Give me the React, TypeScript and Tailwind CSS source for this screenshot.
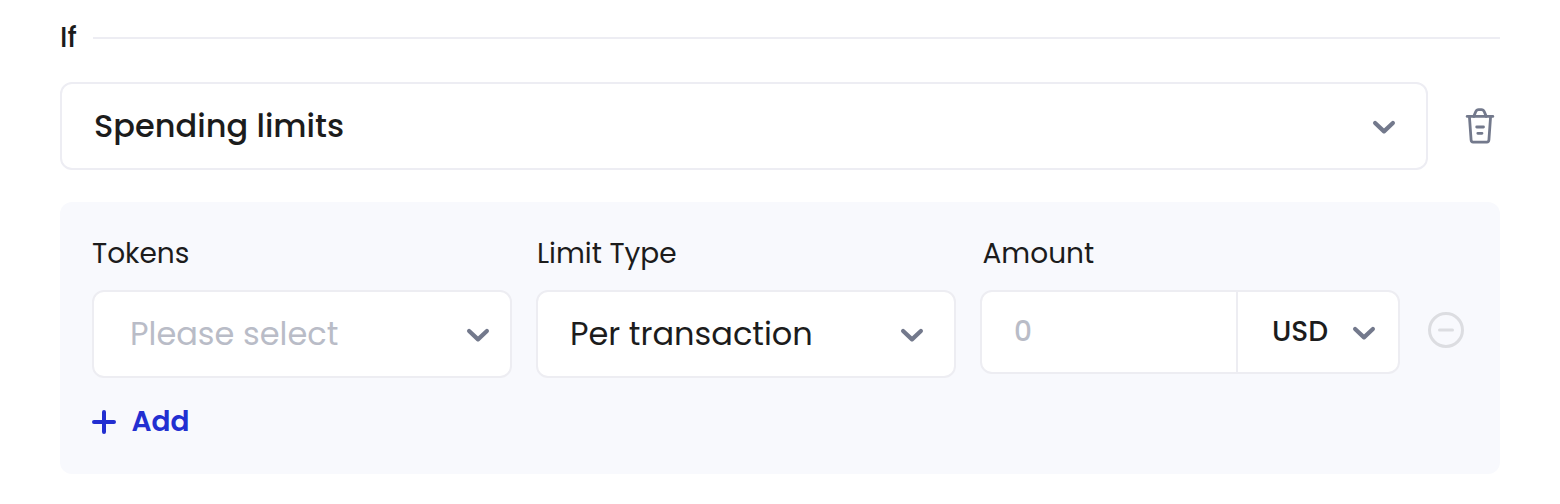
import type { ReactNode } from "react";

function Chevron() {
  return (
    <svg className="shrink-0" width="24" height="24" viewBox="0 0 24 24" fill="none" stroke="#73798c" strokeWidth="4.2" strokeLinecap="round" strokeLinejoin="round">
      <path d="M3.1 9 12 17.4l8.9-8.4" />
    </svg>
  );
}

function TrashIcon() {
  return (
    <svg className="shrink-0" width="40" height="40" viewBox="0 0 40 40" fill="none" stroke="#73798c" strokeWidth="2.8" strokeLinecap="round" strokeLinejoin="round">
      <path d="M7.2 10.4h25.6" />
      <path d="M13.8 10.4l1.9-4.6c.6-1.5 1.4-2.2 2.9-2.2h2.8c1.5 0 2.3.7 2.9 2.2l1.9 4.6" />
      <path d="M9.4 10.4l1.7 23.6c.1 1.4.7 2.1 2 2.1h13.8c1.3 0 1.9-.7 2-2.1l1.7-23.6" />
      <path d="M16.7 21h6.8M17.8 27.3h4.2" />
    </svg>
  );
}

function Field({ label, children }: { label: ReactNode; children: ReactNode }) {
  return (
    <div className="w-[420px]">
      <div className="h-9 text-[28px] leading-9 whitespace-nowrap">{label}</div>
      <div className="mt-[18px]">{children}</div>
    </div>
  );
}

export default function App() {
  return (
    <main className="h-[504px] w-[1560px] bg-white px-[60px] pt-[18px] font-['Poppins','Inter',sans-serif] text-[#1c1c1c]">
      <div className="flex h-10 items-center">
        <h2 className="w-[33px] text-[28px] leading-10 font-medium">If</h2>
        <div className="h-0.5 flex-1 bg-[#ededf3]" />
      </div>

      <div className="mt-6 flex items-center">
        <button className="flex h-[88px] w-[1368px] items-center justify-between rounded-xl border-2 border-[#ededf3] pr-[30px] pl-8 text-[32px] font-medium">
          <span>Spending limits</span>
          <Chevron />
        </button>
        <button className="ml-8" aria-label="Delete">
          <TrashIcon />
        </button>
      </div>

      <section className="mt-8 h-[272px] rounded-xl bg-[#f8f9fd] px-8 pt-[34px]">
        <div className="flex gap-6">
          <Field label={<span>Tokens</span>}>
            <button className="flex h-[88px] w-full items-center justify-between rounded-xl border-2 border-[#ededf2] bg-white pr-5 pl-9 text-[32px] text-[#b9bcc7]">
              <span>Please select</span>
              <Chevron />
            </button>
          </Field>
          <Field label={<span className="ml-px">Limit Type</span>}>
            <button className="flex h-[88px] w-full items-center justify-between rounded-xl border-2 border-[#ededf2] bg-white pr-[30px] pl-8 text-[32px]">
              <span>Per transaction</span>
              <Chevron />
            </button>
          </Field>
          <Field label={<span className="ml-[2.5px]">Amount</span>}>
            <div className="flex h-[84px] w-full rounded-xl border-2 border-[#ededf2] bg-white text-[28px]">
              <div className="flex w-[256px] items-center border-r-2 border-[#ededf2] pl-8 font-medium text-[#b9bcc7]">0</div>
              <button className="flex flex-1 items-center justify-between pr-[22px] pl-[34px] font-medium">
                <span>USD</span>
                <Chevron />
              </button>
            </div>
          </Field>
          <button className="mt-[76px] ml-1 h-9 w-9" aria-label="Remove">
            <svg width="36" height="36" viewBox="0 0 36 36" fill="none" stroke="#dcdde1" strokeWidth="3" strokeLinecap="round">
              <circle cx="18" cy="18" r="16.5" />
              <path d="M11.5 18h13" />
            </svg>
          </button>
        </div>
        <button className="mt-6 flex h-10 items-center gap-[15.5px] text-[28px] font-semibold text-[#222fd1]">
          <svg width="24" height="24" viewBox="0 0 24 24" fill="none" stroke="currentColor" strokeWidth="4" strokeLinecap="round">
            <path d="M12 2v20M2 12h20" />
          </svg>
          <span>Add</span>
        </button>
      </section>
    </main>
  );
}
